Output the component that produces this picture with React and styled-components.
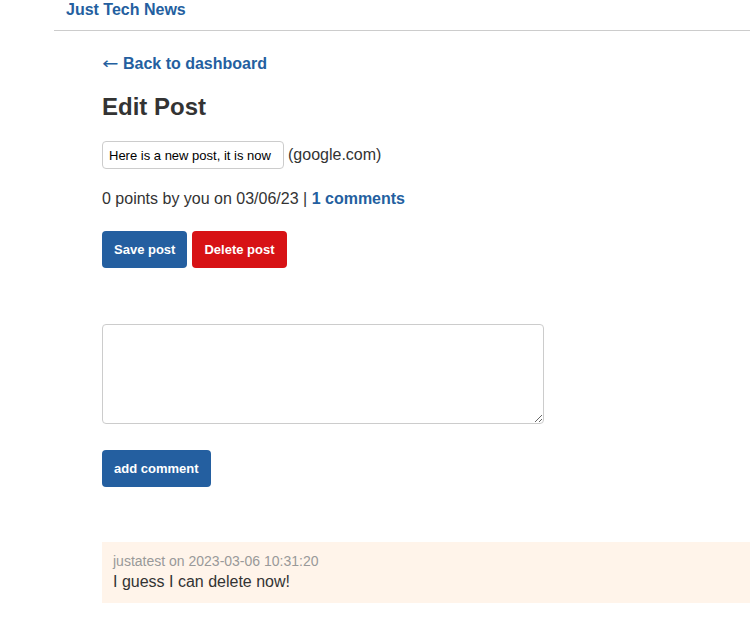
import styled, { createGlobalStyle } from "styled-components";

const GlobalStyle = createGlobalStyle`
    body {
        margin: 0;
        font-family: "Liberation Sans", Arial, sans-serif;
        color: #333;
        background: #fff;
    }
`

const App = () => {
    return (
        <>
            <GlobalStyle />
            <Page>
                <Header>
                    <Brand href="#">Just Tech News</Brand>
                </Header>
                <Main>
                    <BackLink href="#"><Arrow>←</Arrow> Back to dashboard</BackLink>
                    <Title>Edit Post</Title>
                    <TitleRow>
                        <TitleInput defaultValue="Here is a new post, it is now" />
                        <Domain>(google.com)</Domain>
                    </TitleRow>
                    <Meta>
                        0 points by you on 03/06/23 | <MetaLink href="#">1 comments</MetaLink>
                    </Meta>
                    <Actions>
                        <Button>Save post</Button>
                        <Button danger>Delete post</Button>
                    </Actions>
                    <CommentForm>
                        <CommentInput />
                        <Button>add comment</Button>
                    </CommentForm>
                    <Comment>
                        <CommentMeta>justatest on 2023-03-06 10:31:20</CommentMeta>
                        <CommentText>I guess I can delete now!</CommentText>
                    </Comment>
                </Main>
            </Page>
        </>
    )
}

const Page = styled.div`
    padding-left: 54px;
`

const Header = styled.header`
    border-bottom: 1px solid #ccc;
    padding: 1px 12px 11px;
`

const Brand = styled.a`
    color: #245fa0;
    font-size: 16px;
    font-weight: bold;
    line-height: 18px;
    text-decoration: none;
`

const Main = styled.main`
    display: flex;
    flex-direction: column;
    align-items: flex-start;
    padding: 24px 0 0 48px;
`

const BackLink = styled.a`
    color: #245fa0;
    font-size: 16px;
    font-weight: bold;
    line-height: 18px;
    text-decoration: none;
`

const Arrow = styled.span`
    display: inline-block;
    width: 16.5px;
    font-family: "DejaVu Sans", sans-serif;
    font-weight: normal;
    transform: scaleX(1.22);
    transform-origin: left center;
`

const Title = styled.h1`
    font-size: 24px;
    line-height: 28px;
    margin: 20px 0 20px;
`

const TitleRow = styled.div`
    display: flex;
    align-items: center;
    gap: 4px;
`

const TitleInput = styled.input`
    width: 182px;
    height: 28px;
    box-sizing: border-box;
    border: 1px solid #ccc;
    border-radius: 4px;
    padding: 0 6px;
    font-family: "Liberation Sans", Arial, sans-serif;
    font-size: 13px;
    color: #000;
`

const Domain = styled.span`
    font-size: 16px;
`

const Meta = styled.p`
    font-size: 16px;
    line-height: 18px;
    margin: 21px 0 23px;
`

const MetaLink = styled.a`
    color: #245fa0;
    font-weight: bold;
    text-decoration: none;
`

const Actions = styled.div`
    display: flex;
    gap: 5px;
`

const Button = styled.button`
    background: ${props => props.danger ? "#d71215" : "#245fa0"};
    border: none;
    border-radius: 4px;
    color: #fff;
    font-family: "Liberation Sans", Arial, sans-serif;
    font-size: 13px;
    font-weight: bold;
    height: 37px;
    padding: 0 12px;
`

const CommentForm = styled.form`
    display: flex;
    flex-direction: column;
    align-items: flex-start;
    gap: 26px;
    margin-top: 56px;
`

const CommentInput = styled.textarea`
    width: 442px;
    height: 100px;
    box-sizing: border-box;
    border: 1px solid #ccc;
    border-radius: 4px;
    display: block;
`

const Comment = styled.div`
    align-self: stretch;
    background: #fff4ea;
    margin-top: 55px;
    padding: 11px 11px 12px;
`

const CommentMeta = styled.div`
    color: #999;
    font-size: 14px;
    line-height: 16px;
    margin-bottom: 4px;
`

const CommentText = styled.div`
    font-size: 16px;
    line-height: 18px;
`

export default App;
